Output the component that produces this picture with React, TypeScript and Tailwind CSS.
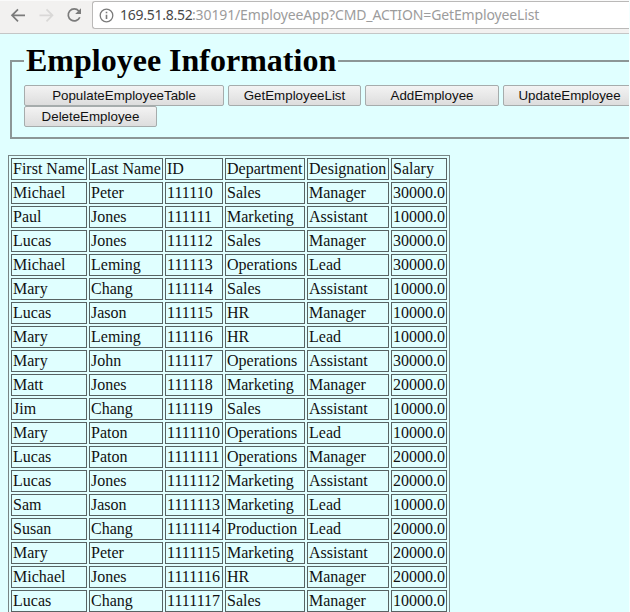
import React from 'react';

const rows: string[][] = [
  ['First Name', 'Last Name', 'ID', 'Department', 'Designation', 'Salary'],
  ['Michael', 'Peter', '111110', 'Sales', 'Manager', '30000.0'],
  ['Paul', 'Jones', '111111', 'Marketing', 'Assistant', '10000.0'],
  ['Lucas', 'Jones', '111112', 'Sales', 'Manager', '30000.0'],
  ['Michael', 'Leming', '111113', 'Operations', 'Lead', '30000.0'],
  ['Mary', 'Chang', '111114', 'Sales', 'Assistant', '10000.0'],
  ['Lucas', 'Jason', '111115', 'HR', 'Manager', '10000.0'],
  ['Mary', 'Leming', '111116', 'HR', 'Lead', '10000.0'],
  ['Mary', 'John', '111117', 'Operations', 'Assistant', '30000.0'],
  ['Matt', 'Jones', '111118', 'Marketing', 'Manager', '20000.0'],
  ['Jim', 'Chang', '111119', 'Sales', 'Assistant', '10000.0'],
  ['Mary', 'Paton', '1111110', 'Operations', 'Lead', '10000.0'],
  ['Lucas', 'Paton', '1111111', 'Operations', 'Manager', '20000.0'],
  ['Lucas', 'Jones', '1111112', 'Marketing', 'Assistant', '20000.0'],
  ['Sam', 'Jason', '1111113', 'Marketing', 'Lead', '10000.0'],
  ['Susan', 'Chang', '1111114', 'Production', 'Lead', '20000.0'],
  ['Mary', 'Peter', '1111115', 'Marketing', 'Assistant', '20000.0'],
  ['Michael', 'Jones', '1111116', 'HR', 'Manager', '20000.0'],
  ['Lucas', 'Chang', '1111117', 'Sales', 'Manager', '10000.0'],
];

function Toolbar() {
  return (
    <header className="flex h-[34px] w-full shrink-0 items-start overflow-hidden border-b border-[#c4c6c6] border-t border-t-[#fafafa] bg-[#f2f1f0]">
      <svg className="h-[32px] w-[92px] shrink-0" viewBox="0 1 92 32" fill="none" strokeWidth="1.7">
        <path d="M25 15.3H12.5M18 9.3L12 15.3L18 21.3" stroke="#7b7b7b" />
        <path d="M39.5 15.3H52M46.5 9.3L52.5 15.3L46.5 21.3" stroke="#d9d8d7" />
        <path d="M78.8 11A6 6 0 1 0 79.8 17.2" stroke="#7b7b7b" />
        <path d="M81 8.3V14.1H75.2Z" fill="#7b7b7b" />
      </svg>
      <div className="flex h-7 flex-1 items-center rounded-l-[3px] border border-r-0 border-[#bab9b8] bg-white">
        <svg className="ml-1.5 h-[15px] w-[15px] shrink-0" viewBox="0 0 15 15" fill="none" stroke="#7a7a7a" strokeWidth="1.3">
          <circle cx="7.5" cy="7.5" r="6.3" />
          <path d="M7.5 6.7V11M7.5 3.8V5.3" strokeWidth="1.6" />
        </svg>
        <div className="ml-1.5 flex whitespace-nowrap font-['Noto_Sans',sans-serif] text-[14px] leading-5">
          <span className="w-[72px] tracking-[-0.25px] text-[#484848]">169.51.8.52</span>
          <span className="tracking-[-0.13px] text-[#9c9c9c]">:30191/EmployeeApp?CMD_ACTION=GetEmployeeList</span>
        </div>
      </div>
    </header>
  );
}

const buttonBase =
  "h-[21px] shrink-0 rounded-[2px] border border-[#a6acac] bg-linear-to-b from-[#f3f3f3] to-[#dddddd] text-center font-['Liberation_Sans',Arial,sans-serif] text-[13.33px] leading-[19px] text-[#111111]";

export default function App() {
  return (
    <div className="flex h-[612px] w-[630px] flex-col overflow-hidden border-r border-[#f4ffff] bg-[#e0ffff] font-['Liberation_Serif',serif] text-black">
      <Toolbar />
      <main className="flex flex-col items-start pl-2">
        <fieldset className="ml-0.5 mt-2 h-[97px] w-[640px] border-2 border-[#8c9696] pl-3">
          <legend className="h-[37px] px-0.5 text-[32px] font-bold leading-9">Employee Information</legend>
          <div className="mt-[6px] flex gap-1">
            <button className={buttonBase + ' w-[200px]'}>PopulateEmployeeTable</button>
            <button className={buttonBase + ' w-[133px]'}>GetEmployeeList</button>
            <button className={buttonBase + ' w-[134px]'}>AddEmployee</button>
            <button className={buttonBase + ' w-[133px]'}>UpdateEmployee</button>
          </div>
          <button className={buttonBase + ' block w-[133px]'}>DeleteEmployee</button>
        </fieldset>
        <table className="mt-4 w-[442px] table-fixed border-separate border-spacing-[2px] border border-[#788585] text-base">
          <colgroup>
            <col className="w-[76px]" />
            <col className="w-[74px]" />
            <col className="w-[58px]" />
            <col className="w-[80px]" />
            <col className="w-[82px]" />
            <col className="w-[56px]" />
          </colgroup>
          <tbody>
            {rows.map((row, i) => (
              <tr key={i}>
                {row.map((cell, j) => (
                  <td key={j} className="h-[22px] whitespace-nowrap border border-[#586363] p-px text-[16px] leading-[18px] text-[#111]">
                    {cell}
                  </td>
                ))}
              </tr>
            ))}
          </tbody>
        </table>
      </main>
    </div>
  );
}
